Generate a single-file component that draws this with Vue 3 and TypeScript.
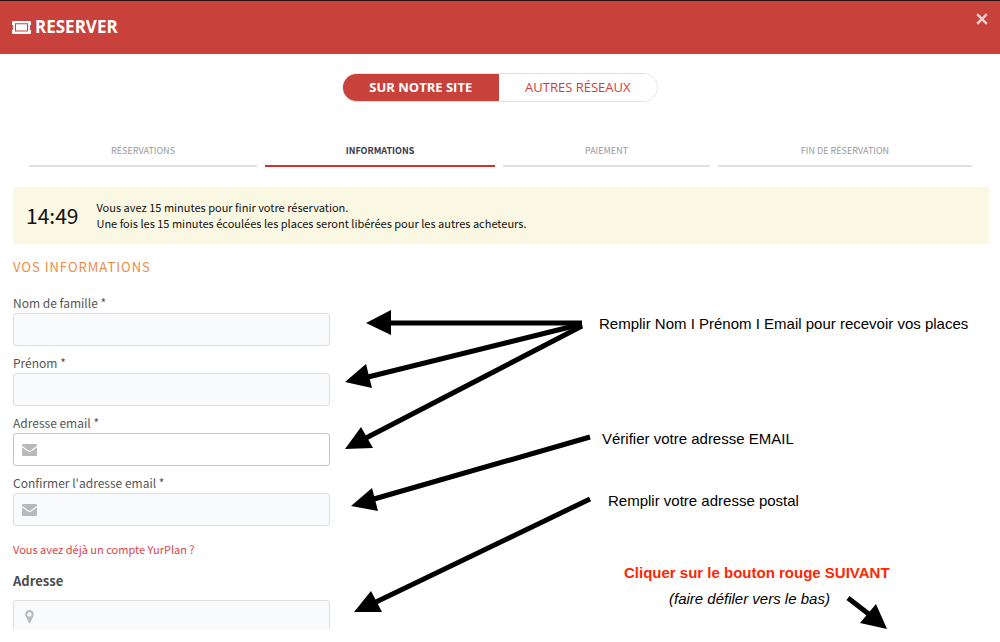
<script setup lang="ts">
interface Step {
  label: string
  active: boolean
}

interface Field {
  id: string
  label: string
  type: string
  icon: boolean
  focused: boolean
}

interface Arrow {
  line: [number, number, number, number]
  head: string
}

const steps: Step[] = [
  { label: 'RÉSERVATIONS', active: false },
  { label: 'INFORMATIONS', active: true },
  { label: 'PAIEMENT', active: false },
  { label: 'FIN DE RÉSERVATION', active: false },
]

const fields: Field[] = [
  { id: 'nom', label: 'Nom de famille *', type: 'text', icon: false, focused: false },
  { id: 'prenom', label: 'Prénom *', type: 'text', icon: false, focused: false },
  { id: 'email', label: 'Adresse email *', type: 'email', icon: true, focused: true },
  { id: 'email2', label: "Confirmer l'adresse email *", type: 'email', icon: true, focused: false },
]

const arrows: Arrow[] = [
  { line: [582, 323, 389, 323], head: '366,323 391,310 391,335' },
  { line: [582, 324, 368, 377], head: '345,382 366,364 372,388' },
  { line: [582, 326, 366, 438], head: '345,449 361,427 373,448' },
  { line: [590, 437, 374, 499], head: '351,506 372,488 378,511' },
  { line: [590, 499, 376, 602], head: '354,612 371,591 382,612' },
  { line: [848, 598, 870, 615], head: '887,629 860,623 876,604' },
]
</script>

<template>
  <div class="page">
    <header class="bar">
      <h1 class="bar-title">
        <svg class="ticket" viewBox="0 0 19 13" aria-hidden="true">
          <path
            fill="#fff"
            fill-rule="evenodd"
            d="M1 0H18Q19 0 19 1V4Q17.6 4.2 17.6 5Q17.6 5.6 18.2 6V7Q17.6 7.4 17.6 8Q17.6 8.8 19 9V12Q19 13 18 13H1Q0 13 0 12V9Q1.400 8.800 1.400 8Q1.400 7.400 .8 7V6Q1.400 5.600 1.400 5Q1.400 4.200 0 4V1Q0 0 1 0ZM3 2.300V10.500H16V2.300ZM4 3.300H15V9.500H4Z"
          />
        </svg>
        <span>RESERVER</span>
      </h1>
      <button class="close" type="button" aria-label="Fermer">
        <svg viewBox="0 0 10 10" aria-hidden="true">
          <path d="M1 1L9 9M9 1L1 9" stroke="#f6d3d1" stroke-width="2" />
        </svg>
      </button>
    </header>

    <nav class="switch">
      <button class="switch-item selected" type="button">SUR NOTRE SITE</button>
      <button class="switch-item" type="button">AUTRES RÉSEAUX</button>
    </nav>

    <main class="content">
      <ol class="steps">
        <li v-for="step in steps" :key="step.label" class="step" :class="{ active: step.active }">
          {{ step.label }}
        </li>
      </ol>

      <section class="notice">
        <span class="timer">14:49</span>
        <p class="notice-text">
          Vous avez 15 minutes pour finir votre réservation.<br />
          Une fois les 15 minutes écoulées les places seront libérées pour les autres acheteurs.
        </p>
      </section>

      <form class="form" @submit.prevent>
        <h2 class="section-title">VOS INFORMATIONS</h2>
        <div v-for="field in fields" :key="field.id" class="field">
          <label :for="field.id">{{ field.label }}</label>
          <div class="box" :class="{ focused: field.focused }">
            <svg v-if="field.icon" class="mail" viewBox="0 0 15 12" aria-hidden="true">
              <path
                fill="#b9b9b9"
                d="M1 0H14Q15 0 15 1V1.800L9 6.200Q7.500 7.200 6 6.200L0 1.800V1Q0 0 1 0ZM0 3.200L5.400 7.200Q7.500 8.600 9.600 7.200L15 3.200V11Q15 12 14 12H1Q0 12 0 11Z"
              />
            </svg>
            <input :id="field.id" :type="field.type" />
          </div>
        </div>

        <a class="account" href="#">Vous avez déjà un compte YurPlan ?</a>

        <label class="address-title" for="adresse">Adresse</label>
        <div class="cut">
          <div class="box">
            <svg class="pin" viewBox="0 0 9 13" aria-hidden="true">
              <path
                fill="#b9b9b9"
                fill-rule="evenodd"
                d="M4.500 0A4.300 4.300 0 0 1 8.800 4.300Q8.800 5.400 8.300 6.300L5.300 12.500Q4.500 13.500 3.700 12.500L.7 6.300Q.2 5.400 .2 4.300A4.300 4.300 0 0 1 4.500 0ZM4.500 2.200A2.200 2.200 0 1 0 4.500 6.600A2.200 2.200 0 1 0 4.500 2.200Z"
              />
            </svg>
            <input id="adresse" type="text" />
          </div>
        </div>
      </form>
    </main>

    <svg class="arrows" width="1000" height="642" viewBox="0 0 1000 642" aria-hidden="true">
      <g v-for="arrow in arrows" :key="arrow.head">
        <line
          :x1="arrow.line[0]"
          :y1="arrow.line[1]"
          :x2="arrow.line[2]"
          :y2="arrow.line[3]"
          stroke="#000"
          stroke-width="5"
        />
        <polygon :points="arrow.head" />
      </g>
    </svg>

    <p class="note note-names">Remplir Nom I Prénom I Email pour recevoir vos places</p>
    <p class="note note-email">Vérifier votre adresse EMAIL</p>
    <p class="note note-address">Remplir votre adresse postal</p>
    <p class="note note-next">Cliquer sur le bouton rouge SUIVANT</p>
    <p class="note note-scroll">(faire défiler vers le bas)</p>
  </div>
</template>

<style>
body {
  margin: 0;
  background: #fff;
}
</style>

<style scoped>
.page {
  position: relative;
  padding-bottom: 12px;
  overflow: hidden;
  font-family: "Noto Sans CJK SC", "Noto Sans", sans-serif;
  color: #555;
}

.bar {
  display: flex;
  justify-content: space-between;
  align-items: flex-start;
  height: 53px;
  padding: 0 12px;
  border-top: 1px solid #2a1010;
  background: #c9413b;
}

.bar-title {
  display: flex;
  align-items: center;
  gap: 4px;
  margin: 0;
  font: 700 17px/52px "Open Sans", "Noto Sans", sans-serif;
  color: #fff;
}

.ticket {
  width: 19px;
  height: 13px;
}

.close {
  display: flex;
  margin: 12px 0 0;
  padding: 0;
  border: 0;
  background: none;
}

.close svg {
  width: 12px;
  height: 12px;
}

.switch {
  display: grid;
  grid-template-columns: 156fr 159fr;
  width: 316px;
  margin: 19px auto 0;
  box-sizing: border-box;
  height: 29px;
  border: 1px solid #e2e2e2;
  border-radius: 15px;
  overflow: hidden;
}

.switch-item {
  padding: 0;
  border: 0;
  background: #fff;
  font: 400 13px/27px "Open Sans", "Noto Sans", sans-serif;
  color: #cf3f39;
}

.switch-item.selected {
  background: #c9413b;
  font-weight: 700;
  color: #fff;
}

.content {
  padding: 39px 11px 0 13px;
}

.steps {
  display: grid;
  grid-template-columns: 228fr 230fr 207fr 254fr;
  gap: 8px;
  margin: 0 17px 0 16px;
  padding: 0;
  list-style: none;
}

.step {
  padding-bottom: 4px;
  border-bottom: 2px solid #e0e0e0;
  font-size: 9px;
  line-height: 20px;
  text-align: center;
  color: #999;
}

.step.active {
  border-color: #cc332c;
  font-weight: 700;
  color: #3a3a48;
}

.notice {
  display: flex;
  align-items: center;
  gap: 18px;
  margin-top: 20px;
  padding: 12px 13px 13px;
  border-radius: 2px;
  background: #faf7e3;
  color: #111;
}

.timer {
  font-size: 21px;
  line-height: 32px;
}

.notice-text {
  margin: 0;
  font-size: 11px;
  line-height: 16px;
}

.form {
  width: 317px;
}

.section-title {
  margin: 13px 0 16px;
  font-size: 13px;
  font-weight: 400;
  line-height: 20px;
  letter-spacing: 1px;
  color: #ee8b45;
}

.field {
  margin-bottom: 7px;
}

.field label {
  display: block;
  font-size: 12px;
  line-height: 20px;
}

.box {
  display: flex;
  align-items: center;
  box-sizing: border-box;
  height: 33px;
  border: 1px solid #dedede;
  border-radius: 3px;
  background: #f9fafc;
}

.box.focused {
  border-color: #c4c4c4;
  background: #fff;
}

.box input {
  flex: 1;
  min-width: 0;
  height: 100%;
  padding: 0 8px;
  box-sizing: border-box;
  border: 0;
  outline: 0;
  background: none;
  font: inherit;
}

.mail {
  width: 15px;
  height: 12px;
  margin-left: 8px;
}

.pin {
  width: 9px;
  height: 13px;
  margin-left: 11px;
}

.account {
  display: block;
  margin-top: 13px;
  font-size: 11px;
  line-height: 20px;
  color: #d8454a;
  text-decoration: none;
}

.address-title {
  display: block;
  margin: 12px 0 9px;
  font-size: 13px;
  font-weight: 700;
  line-height: 20px;
  color: #4c4c4c;
}

.cut {
  height: 29px;
  overflow: hidden;
}

.arrows {
  position: absolute;
  top: 0;
  left: 0;
  pointer-events: none;
}

.note {
  position: absolute;
  margin: 0;
  font: 400 15px/20px "Liberation Sans", Arial, sans-serif;
  color: #000;
  white-space: nowrap;
}

.note-names {
  top: 314px;
  left: 599px;
}

.note-email {
  top: 429px;
  left: 602px;
}

.note-address {
  top: 491px;
  left: 608px;
}

.note-next {
  top: 563px;
  left: 624px;
  font-weight: 700;
  color: #ff2600;
}

.note-scroll {
  top: 589px;
  left: 669px;
  font-style: italic;
}
</style>
